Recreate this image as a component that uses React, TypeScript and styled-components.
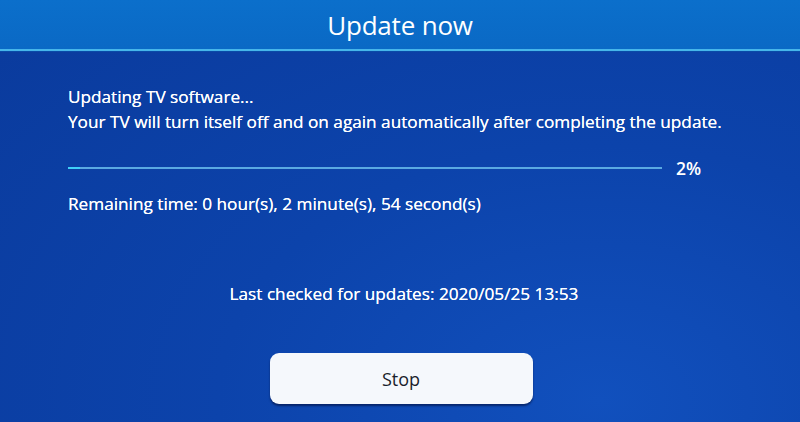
import styled, { createGlobalStyle } from 'styled-components';

const GlobalStyle = createGlobalStyle`
  html, body {
    margin: 0;
    padding: 0;
  }
  body {
    font-family: 'Open Sans', 'Noto Sans', sans-serif;
    color: #ffffff;
  }
`;

const Screen = styled.div`
  width: 800px;
  height: 422px;
  display: flex;
  flex-direction: column;
  overflow: hidden;
  background: radial-gradient(ellipse at 75% 95%, #1150bd 0%, #0c43ab 45%, #0a3a9c 100%);
`;

const Header = styled.header`
  height: 49px;
  display: flex;
  align-items: center;
  justify-content: center;
  background: linear-gradient(180deg, #0b6fcb 0%, #0a69c5 100%);
  border-bottom: 2px solid #46b6ea;
  box-shadow: 0 1px 0 #0a4aa8;
`;

const Title = styled.h1`
  margin: 0;
  font-family: 'Open Sans', 'Noto Sans', sans-serif;
  font-size: 26px;
  font-weight: 400;
  letter-spacing: -0.2px;
`;

const Body = styled.main`
  flex: 1;
  display: flex;
  flex-direction: column;
  padding: 33px 68px 0 68px;
`;

const Message = styled.p`
  margin: 0;
  font-size: 17.2px;
  font-weight: 500;
  line-height: 25px;
  text-shadow: 0 0 0.4px #ffffff;
`;

const ProgressRow = styled.div`
  display: flex;
  align-items: center;
  gap: 14px;
  margin-top: 22px;
`;

const Track = styled.div`
  position: relative;
  width: 594px;
  height: 2px;
  background: #5aa9e2;
`;

const Fill = styled.div`
  position: absolute;
  left: 0;
  top: 0;
  height: 100%;
  background: #40d0f8;
`;

const Percent = styled.span`
  font-size: 17.5px;
  font-weight: 600;
`;

const Remaining = styled(Message)`
  margin-top: 11px;
`;

const LastChecked = styled(Message)`
  margin-top: 65px;
  text-align: center;
  padding-left: 8px;
  margin-right: -68px;
  margin-left: -68px;
`;

const ButtonRow = styled.div`
  display: flex;
  justify-content: center;
  margin-top: 47px;
  padding-left: 2px;
  margin-right: -68px;
  margin-left: -68px;
`;

const StopButton = styled.button`
  width: 263px;
  height: 51px;
  border: none;
  border-radius: 9px;
  background: #f5f8fc;
  color: #1a1f2c;
  font-family: 'Open Sans', 'Noto Sans', sans-serif;
  font-size: 18px;
  font-weight: 500;
  box-shadow: 0 2px 2px rgba(0, 10, 50, 0.55);
  cursor: pointer;
`;

const progress = 2;

export default function App() {
  return (
    <>
      <GlobalStyle />
      <Screen>
        <Header>
          <Title>Update now</Title>
        </Header>
        <Body>
          <Message>Updating TV software...</Message>
          <Message>
            Your TV will turn itself off and on again automatically after completing the update.
          </Message>
          <ProgressRow>
            <Track>
              <Fill style={{ width: `${progress}%` }} />
            </Track>
            <Percent>{progress}%</Percent>
          </ProgressRow>
          <Remaining>Remaining time: 0 hour(s), 2 minute(s), 54 second(s)</Remaining>
          <LastChecked>Last checked for updates: 2020/05/25 13:53</LastChecked>
          <ButtonRow>
            <StopButton>Stop</StopButton>
          </ButtonRow>
        </Body>
      </Screen>
    </>
  );
}
